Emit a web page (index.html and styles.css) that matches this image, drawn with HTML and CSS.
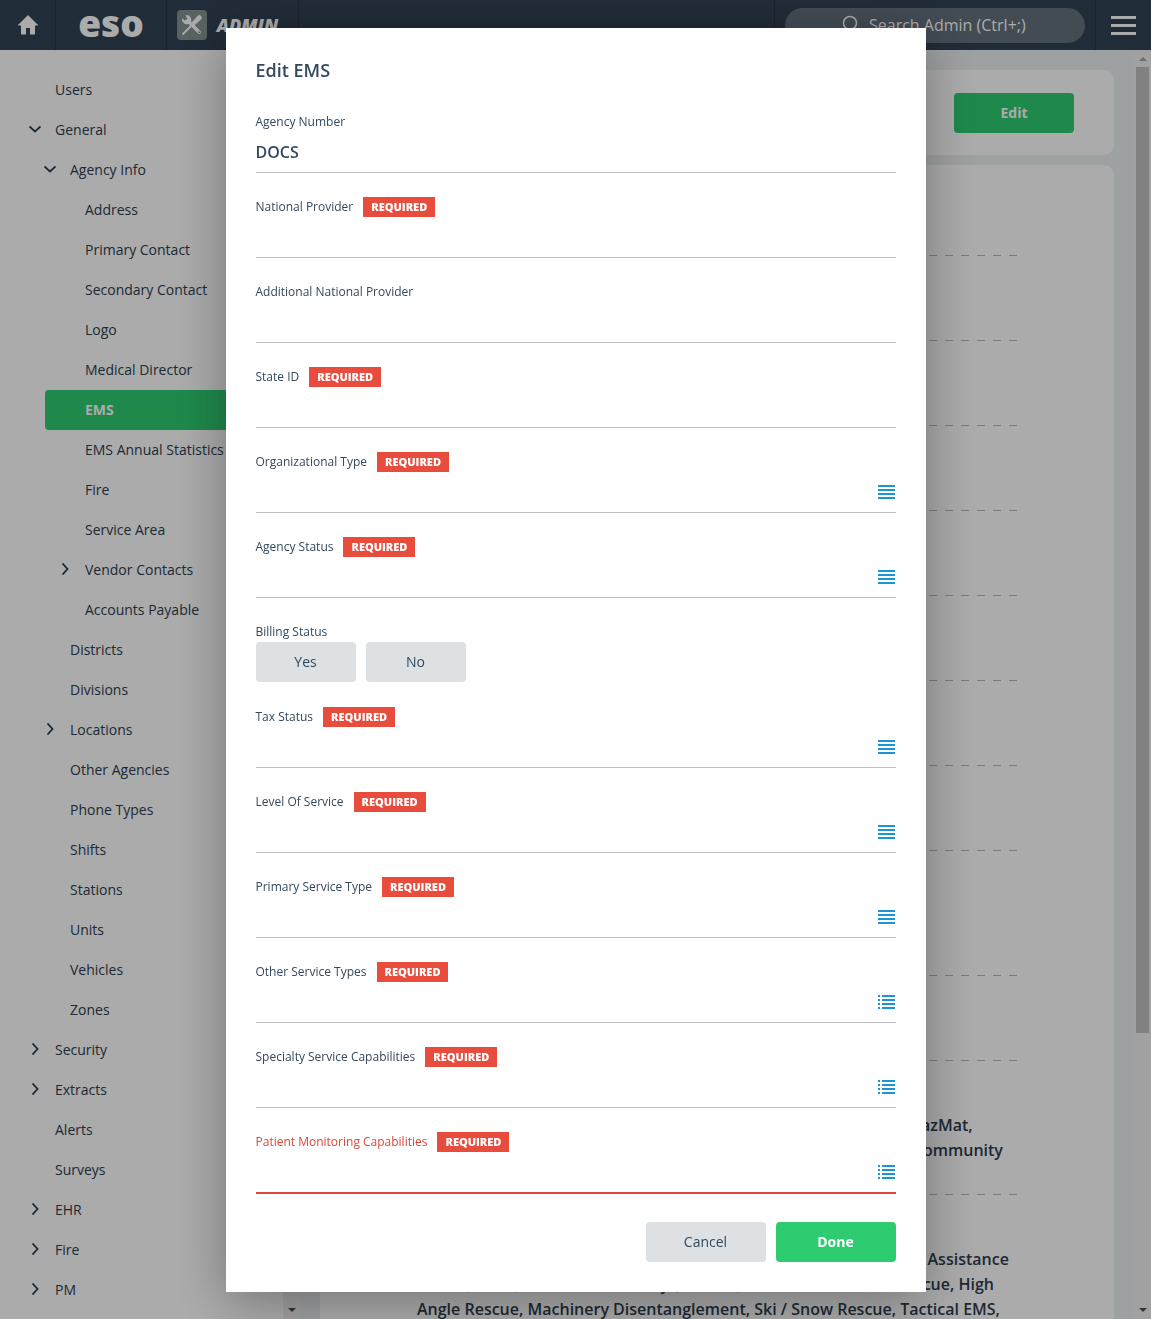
FILE: index.html
```
<!DOCTYPE html>
<html lang="en">
<head>
  <meta charset="UTF-8">
  <title>ESO Admin - EMS</title>
  <link rel="stylesheet" href="styles.css">
</head>
<body>
  <!-- Icons used more than once -->
  <svg class="sprite" aria-hidden="true">
    <symbol id="chevron" viewBox="0 0 12 12"><path d="M3.500 .5 L8.500 6 L3.500 11.500" fill="none" stroke="currentColor" stroke-width="1.800"/></symbol>
    <symbol id="single" viewBox="0 0 18 14"><path d="M0 1h17M0 5h17M0 9h17M0 13h17" stroke="currentColor" stroke-width="2"/></symbol>
    <symbol id="multi" viewBox="0 0 18 14"><path d="M0 1h2M0 5h2M0 9h2M0 13h2M4 1h13M4 5h13M4 9h13M4 13h13" stroke="currentColor" stroke-width="2"/></symbol>
    <symbol id="arrow" viewBox="0 0 8 4"><path d="M0 0h8L4 4z" fill="currentColor"/></symbol>
  </svg>

  <header class="topbar">
    <a class="home" href="#" aria-label="Home">
      <svg width="22" height="20" viewBox="0 0 22 20"><path d="M11 0 L21.500 10.500H18V19.500H13V13H9V19.500H4V10.500H.5z" fill="currentColor"/></svg>
    </a>
    <a class="logo" href="#">eso</a>
    <a class="app" href="#">
      <span class="app-icon">
        <svg width="22" height="22" viewBox="0 0 22 22">
          <path d="M7 7 L18.300 18.300" stroke="currentColor" stroke-width="3.400" stroke-linecap="round"/>
          <path d="M4.500 1.200 A4.600 4.600 0 1 1 1.200 4.500 L4 6.500 L6.500 5z" fill="currentColor"/>
          <circle cx="18.300" cy="18.300" r="1" class="app-icon-hole"/>
          <path d="M1.500 20.500 L11 11" stroke="currentColor" stroke-width="1.800"/>
          <path d="M9.500 9.800 L17 1.500 Q18.500 .5 20 2 Q21.500 3.500 20.500 5 L12.300 12.500z" fill="currentColor"/>
        </svg>
      </span>
      ADMIN
    </a>
    <div class="search-wrap">
      <label class="search">
        <svg width="18" height="20" viewBox="0 0 18 20"><circle cx="9" cy="8" r="6.500" fill="none" stroke="currentColor" stroke-width="1.600"/><path d="M12 13l4 6" stroke="currentColor" stroke-width="1.600"/></svg>
        <input type="text" placeholder="Search Admin (Ctrl+;)" aria-label="Search Admin">
      </label>
    </div>
    <button class="menu" type="button" aria-label="Menu">
      <svg width="25" height="19" viewBox="0 0 25 19"><path d="M0 1.500h25M0 9.500h25M0 17.500h25" stroke="currentColor" stroke-width="3"/></svg>
    </button>
  </header>

  <div class="layout">
    <nav class="sidebar">
      <ul class="tree">
        <li><a href="#">Users</a></li>
        <li><a href="#"><svg class="chev open"><use href="#chevron"/></svg>General</a></li>
        <li class="l2"><a href="#"><svg class="chev open"><use href="#chevron"/></svg>Agency Info</a></li>
        <li class="l3"><a href="#">Address</a></li>
        <li class="l3"><a href="#">Primary Contact</a></li>
        <li class="l3"><a href="#">Secondary Contact</a></li>
        <li class="l3"><a href="#">Logo</a></li>
        <li class="l3"><a href="#">Medical Director</a></li>
        <li class="l3 active"><a href="#">EMS</a></li>
        <li class="l3"><a href="#">EMS Annual Statistics</a></li>
        <li class="l3"><a href="#">Fire</a></li>
        <li class="l3"><a href="#">Service Area</a></li>
        <li class="l3"><a href="#"><svg class="chev"><use href="#chevron"/></svg>Vendor Contacts</a></li>
        <li class="l3"><a href="#">Accounts Payable</a></li>
        <li class="l2"><a href="#">Districts</a></li>
        <li class="l2"><a href="#">Divisions</a></li>
        <li class="l2"><a href="#"><svg class="chev"><use href="#chevron"/></svg>Locations</a></li>
        <li class="l2"><a href="#">Other Agencies</a></li>
        <li class="l2"><a href="#">Phone Types</a></li>
        <li class="l2"><a href="#">Shifts</a></li>
        <li class="l2"><a href="#">Stations</a></li>
        <li class="l2"><a href="#">Units</a></li>
        <li class="l2"><a href="#">Vehicles</a></li>
        <li class="l2"><a href="#">Zones</a></li>
        <li><a href="#"><svg class="chev"><use href="#chevron"/></svg>Security</a></li>
        <li><a href="#"><svg class="chev"><use href="#chevron"/></svg>Extracts</a></li>
        <li><a href="#">Alerts</a></li>
        <li><a href="#">Surveys</a></li>
        <li><a href="#"><svg class="chev"><use href="#chevron"/></svg>EHR</a></li>
        <li><a href="#"><svg class="chev"><use href="#chevron"/></svg>Fire</a></li>
        <li><a href="#"><svg class="chev"><use href="#chevron"/></svg>PM</a></li>
      </ul>
      <div class="scrollbar">
        <svg class="arrow up"><use href="#arrow"/></svg>
        <div class="thumb"></div>
        <svg class="arrow"><use href="#arrow"/></svg>
      </div>
    </nav>

    <main class="content">
      <div class="cards">
        <section class="card card-head">
          <button class="btn btn-green" type="button">Edit</button>
        </section>
        <section class="card details">
          <div class="row"></div>
          <div class="row"></div>
          <div class="row"></div>
          <div class="row"></div>
          <div class="row"></div>
          <div class="row"></div>
          <div class="row"></div>
          <div class="row"></div>
          <div class="row row-tall"></div>
          <div class="row"></div>
          <div class="row">
            <p>911 Response (Scene) with Transport Capability, Air Transports, HazMat,<br>Medical Transport (Convalescent, Interfacility Transfer), Rescue, Community<br>Paramedicine</p>
          </div>
          <div class="row">
            <p>Air Rescue, CBRNE, Community Health Medicine, Disaster Medical Assistance<br>Team (DMAT), Disaster Mortuary (DMORT), Dive Rescue, Farm Rescue, High<br>Angle Rescue, Machinery Disentanglement, Ski / Snow Rescue, Tactical EMS,</p>
          </div>
        </section>
      </div>
      <div class="scrollbar">
        <svg class="arrow up off"><use href="#arrow"/></svg>
        <div class="thumb"></div>
        <svg class="arrow"><use href="#arrow"/></svg>
      </div>
    </main>
  </div>

  <div class="overlay">
    <form class="modal" role="dialog" aria-labelledby="modal-title">
      <h2 id="modal-title">Edit EMS</h2>
      <div class="fields">
        <div class="field">
          <div class="label"><label for="agency-number">Agency Number</label></div>
          <div class="control"><input id="agency-number" type="text" value="DOCS"></div>
        </div>
        <div class="field">
          <div class="label"><label for="national-provider">National Provider</label><span class="required">REQUIRED</span></div>
          <div class="control"><input id="national-provider" type="text"></div>
        </div>
        <div class="field">
          <div class="label"><label for="additional-provider">Additional National Provider</label></div>
          <div class="control"><input id="additional-provider" type="text"></div>
        </div>
        <div class="field">
          <div class="label"><label for="state-id">State ID</label><span class="required">REQUIRED</span></div>
          <div class="control"><input id="state-id" type="text"></div>
        </div>
        <div class="field">
          <div class="label"><label for="org-type">Organizational Type</label><span class="required">REQUIRED</span></div>
          <div class="control"><input id="org-type" type="text"><svg class="pick"><use href="#single"/></svg></div>
        </div>
        <div class="field">
          <div class="label"><label for="agency-status">Agency Status</label><span class="required">REQUIRED</span></div>
          <div class="control"><input id="agency-status" type="text"><svg class="pick"><use href="#single"/></svg></div>
        </div>
        <div class="field" role="group" aria-labelledby="billing-status">
          <div class="label" id="billing-status">Billing Status</div>
          <div class="toggle">
            <button class="btn" type="button">Yes</button>
            <button class="btn" type="button">No</button>
          </div>
        </div>
        <div class="field">
          <div class="label"><label for="tax-status">Tax Status</label><span class="required">REQUIRED</span></div>
          <div class="control"><input id="tax-status" type="text"><svg class="pick"><use href="#single"/></svg></div>
        </div>
        <div class="field">
          <div class="label"><label for="level">Level Of Service</label><span class="required">REQUIRED</span></div>
          <div class="control"><input id="level" type="text"><svg class="pick"><use href="#single"/></svg></div>
        </div>
        <div class="field">
          <div class="label"><label for="primary-type">Primary Service Type</label><span class="required">REQUIRED</span></div>
          <div class="control"><input id="primary-type" type="text"><svg class="pick"><use href="#single"/></svg></div>
        </div>
        <div class="field">
          <div class="label"><label for="other-types">Other Service Types</label><span class="required">REQUIRED</span></div>
          <div class="control"><input id="other-types" type="text"><svg class="pick"><use href="#multi"/></svg></div>
        </div>
        <div class="field">
          <div class="label"><label for="specialty">Specialty Service Capabilities</label><span class="required">REQUIRED</span></div>
          <div class="control"><input id="specialty" type="text"><svg class="pick"><use href="#multi"/></svg></div>
        </div>
        <div class="field error">
          <div class="label"><label for="monitoring">Patient Monitoring Capabilities</label><span class="required">REQUIRED</span></div>
          <div class="control"><input id="monitoring" type="text"><svg class="pick"><use href="#multi"/></svg></div>
        </div>
      </div>
      <div class="actions">
        <button class="btn" type="button">Cancel</button>
        <button class="btn btn-green" type="submit">Done</button>
      </div>
    </form>
  </div>
</body>
</html>
```
FILE: styles.css
```
* {
  box-sizing: border-box;
}
body {
  margin: 0;
  height: 100vh;
  display: flex;
  flex-direction: column;
  overflow: hidden;
  font-family: "Open Sans", sans-serif;
  font-size: 14px;
  color: #34495e;
}
a {
  color: inherit;
  text-decoration: none;
}
button, input {
  font: inherit;
  color: inherit;
}
.sprite {
  position: absolute;
  width: 0;
  height: 0;
}

/* top bar */
.topbar {
  flex: none;
  display: flex;
  height: 50px;
  background: #314254;
  color: #fff;
}
.home, .logo, .app, .search-wrap {
  display: flex;
  align-items: center;
  justify-content: center;
  border-right: 1px solid #273543;
}
.home {
  width: 56px;
}
.logo {
  width: 111px;
  padding-bottom: 4px;
  font-size: 37px;
  font-weight: 800;
  line-height: 44px;
}
.app {
  width: 132px;
  gap: 10px;
  padding-right: 10px;
  font-size: 18px;
  font-style: italic;
  font-weight: 800;
}
.app-icon {
  display: flex;
  padding: 4px;
  border-radius: 4px;
  background: #849491;
}
.app-icon-hole {
  fill: #849491;
}
.search-wrap {
  margin-left: auto;
  padding: 0 10px;
  border-left: 1px solid #273543;
}
.search {
  display: flex;
  align-items: center;
  justify-content: center;
  gap: 10px;
  width: 300px;
  height: 35px;
  border-radius: 18px;
  background: #64707d;
}
.search input {
  width: 160px;
  padding: 0;
  border: 0;
  background: none;
  font-size: 16px;
}
.search input::placeholder {
  color: #fff;
}
.menu {
  width: 55px;
  padding: 0;
  border: 0;
  background: none;
}
.menu svg {
  display: block;
  margin: auto;
}

/* page */
.layout {
  flex: 1;
  display: flex;
  min-height: 0;
  color: #2c3e50;
}
.sidebar {
  flex: none;
  display: flex;
  width: 300px;
  background: #fff;
}
.tree {
  flex: 1;
  margin: 0;
  padding: 20px 0 0 15px;
  list-style: none;
  overflow: hidden;
}
.tree a {
  display: flex;
  align-items: center;
  height: 40px;
  padding: 0 0 2px 40px;
  border-radius: 4px;
}
.tree .l2 {
  margin-left: 15px;
}
.tree .l3 {
  margin-left: 30px;
}
.tree .active a {
  background: #2ecc71;
  color: #fff;
  font-weight: 700;
}
.chev {
  width: 12px;
  height: 12px;
  margin: 0 14px 0 -26px;
}
.chev.open {
  transform: rotate(90deg);
}
.content {
  flex: 1;
  display: flex;
  min-width: 0;
  background: #ecf0f1;
}
.cards {
  flex: 1;
  padding: 20px;
  overflow: hidden;
}
.card {
  border-radius: 10px;
  background: #fff;
}
.card-head {
  display: flex;
  align-items: center;
  justify-content: flex-end;
  height: 85px;
  margin-bottom: 10px;
  padding: 0 40px;
}
.details {
  padding-top: 6px;
}
.row {
  max-width: 600px;
  min-height: 85px;
  margin: 0 auto;
  padding: 52px 0 7px;
  /* dashed divider */
  background: repeating-linear-gradient(90deg, #b8b8b8 0 8px, transparent 8px 16px) bottom / 100% 1px no-repeat;
}
.row-tall {
  min-height: 125px;
}
.row p {
  margin: 0;
  font-size: 16px;
  font-weight: 600;
  line-height: 25px;
  white-space: nowrap;
}
.scrollbar {
  flex: none;
  display: flex;
  flex-direction: column;
  align-items: center;
  gap: 6px;
  width: 17px;
  padding: 7px 0;
  background: #f1f1f1;
}
.thumb {
  width: 13px;
  height: 77%;
  flex: none;
  margin-bottom: auto;
  background: #c1c1c1;
}
.arrow {
  flex: none;
  width: 8px;
  height: 4px;
  color: #505050;
}
.arrow.up {
  transform: rotate(180deg);
}
.arrow.off {
  color: #a3a3a3;
}

/* buttons */
.btn {
  width: 120px;
  height: 40px;
  padding: 0;
  border: 0;
  border-radius: 4px;
  background: #dde1e4;
}
.btn-green {
  background: #2ecc71;
  color: #fff;
  font-weight: 700;
}

/* modal */
.overlay {
  position: fixed;
  inset: 0;
  display: flex;
  align-items: center;
  justify-content: center;
  background: rgba(0, 0, 0, 0.33);
}
.modal {
  width: 700px;
  max-width: 100%;
  padding: 30px;
  background: #fff;
  box-shadow: 0 10px 50px rgba(0, 0, 0, 0.33);
}
.modal h2 {
  margin: 0 0 30px;
  font-size: 18px;
  font-weight: 600;
  line-height: 24px;
}
.fields {
  display: flex;
  flex-direction: column;
  gap: 24px;
}
.field {
  min-height: 61px;
}
.label {
  display: flex;
  align-items: center;
  gap: 10px;
  height: 20px;
  font-size: 12px;
}
.required {
  padding: 0 8px;
  background: #e74c3c;
  color: #fff;
  font-size: 11px;
  font-weight: 800;
  line-height: 20px;
}
.control {
  display: flex;
  align-items: center;
  border-bottom: 1px solid #bdbdbd;
}
.control input {
  flex: 1;
  height: 40px;
  padding: 0;
  border: 0;
  outline: 0;
  background: none;
  font-size: 16px;
  font-weight: 600;
}
.pick {
  width: 18px;
  height: 14px;
  color: #1c96d2;
}
.toggle {
  display: flex;
  gap: 10px;
}
.toggle .btn {
  width: 100px;
}
.error .label {
  color: #d9483a;
}
.error .control {
  border-bottom: 2px solid #d9483a;
}
.actions {
  display: flex;
  justify-content: flex-end;
  gap: 10px;
  margin-top: 28px;
}
```
